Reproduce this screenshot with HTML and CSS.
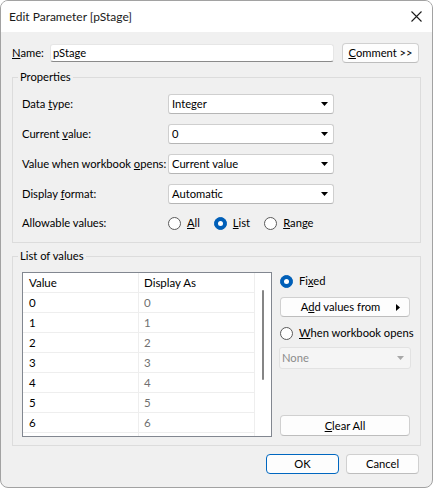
FILE: index.html
```html
<!DOCTYPE html>
<html>
<head>
<meta charset="utf-8">
<title>Edit Parameter</title>
<link rel="stylesheet" href="styles.css">
</head>
<body>
<div class="window">
  <div class="titlebar">
    <span class="title">Edit Parameter [pStage]</span>
    <svg class="close" width="11" height="11" viewBox="0 0 11 11"><path d="M0.5 0.5L10.5 10.5M10.5 0.5L0.5 10.5" stroke="#1b1b1b" stroke-width="1.1" fill="none"/></svg>
  </div>
  <div class="content">
    <div class="name-row">
      <span class="name-label"><u>N</u>ame:</span>
      <div class="textbox">pStage</div>
      <div class="btn comment-btn"><u>C</u>omment &gt;&gt;</div>
    </div>

    <div class="group props">
      <span class="group-title">Properties</span>
      <div class="prop-rows">
        <div class="prop-row">
          <span class="prop-label">Data <u>t</u>ype:</span>
          <div class="combo"><span>Integer</span><svg width="7" height="4" viewBox="0 0 7 4"><path d="M0 0H7L3.5 4Z" fill="#000"/></svg></div>
        </div>
        <div class="prop-row">
          <span class="prop-label">Current <u>v</u>alue:</span>
          <div class="combo"><span>0</span><svg width="7" height="4" viewBox="0 0 7 4"><path d="M0 0H7L3.5 4Z" fill="#000"/></svg></div>
        </div>
        <div class="prop-row">
          <span class="prop-label">Value when workbook <u>o</u>pens:</span>
          <div class="combo"><span>Current value</span><svg width="7" height="4" viewBox="0 0 7 4"><path d="M0 0H7L3.5 4Z" fill="#000"/></svg></div>
        </div>
        <div class="prop-row">
          <span class="prop-label">Display <u>f</u>ormat:</span>
          <div class="combo"><span>Automatic</span><svg width="7" height="4" viewBox="0 0 7 4"><path d="M0 0H7L3.5 4Z" fill="#000"/></svg></div>
        </div>
        <div class="prop-row radio-row">
          <span class="prop-label">Allowable values:</span>
          <div class="radios">
            <span class="radio"><span class="circle"></span><span><u>A</u>ll</span></span>
            <span class="radio"><span class="circle checked"></span><span><u>L</u>ist</span></span>
            <span class="radio"><span class="circle"></span><span><u>R</u>ange</span></span>
          </div>
        </div>
      </div>
    </div>

    <div class="group values">
      <span class="group-title">List of values</span>
      <div class="list-body">
        <div class="table">
          <div class="grid">
            <div class="cell c1">Value</div><div class="cell c2 head">Display As</div>
            <div class="cell c1">0</div><div class="cell c2">0</div>
            <div class="cell c1">1</div><div class="cell c2">1</div>
            <div class="cell c1">2</div><div class="cell c2">2</div>
            <div class="cell c1">3</div><div class="cell c2">3</div>
            <div class="cell c1">4</div><div class="cell c2">4</div>
            <div class="cell c1">5</div><div class="cell c2">5</div>
            <div class="cell c1">6</div><div class="cell c2">6</div>
            <div class="cell c1 partial"></div><div class="cell c2 partial"></div>
          </div>
          <div class="scroll"><div class="thumb"></div></div>
        </div>
        <div class="panel">
          <div class="radio panel-radio"><span class="circle checked"></span><span>Fi<u>x</u>ed</span></div>
          <div class="btn add-btn"><span class="add-label">A<u>d</u>d values from</span><svg width="4" height="7" viewBox="0 0 4 7"><path d="M0 0V7L4 3.5Z" fill="#000"/></svg></div>
          <div class="radio panel-radio when"><span class="circle"></span><span><u>W</u>hen workbook opens</span></div>
          <div class="combo disabled"><span>None</span><svg width="7" height="4" viewBox="0 0 7 4"><path d="M0 0H7L3.5 4Z" fill="#a8a8a8"/></svg></div>
          <div class="btn clear-btn"><u>C</u>lear All</div>
        </div>
      </div>
    </div>

    <div class="footer">
      <div class="btn ok-btn">OK</div>
      <div class="btn">Cancel</div>
    </div>
  </div>
</div>
</body>
</html>
```

FILE: styles.css
```css
html, body {
  margin: 0;
  padding: 0;
  background: #ffffff;
}

body {
  font-family: "Lato", "Liberation Sans", sans-serif;
  font-size: 11.2px;
  line-height: 16px;
  color: #000;
}

u {
  text-decoration: underline;
  text-underline-offset: 1px;
}

.window {
  width: 433px;
  height: 488px;
  box-sizing: border-box;
  border: 1px solid #a2a2a2;
  border-radius: 8px;
  overflow: hidden;
  background: #f0f0f0;
  display: flex;
  flex-direction: column;
}

.titlebar {
  height: 31px;
  flex: none;
  background: #ffffff;
  display: flex;
  align-items: center;
  justify-content: space-between;
  padding: 0 10px 0 8px;
}

.title {
  font-size: 12px;
  color: #1a1a1a;
  white-space: nowrap;
}

.close {
  display: block;
  margin-top: -1px;
}

.content {
  padding: 11px 11px 0 11px;
  display: flex;
  flex-direction: column;
}

/* Name row */
.name-row {
  display: flex;
  align-items: center;
  height: 20px;
  padding-right: 2px;
}

.name-label {
  width: 38px;
  flex: none;
}

.textbox {
  width: 284px;
  height: 18px;
  box-sizing: border-box;
  background: #fff;
  border: 1px solid #e6e6e6;
  border-bottom-color: #8a8a8a;
  border-radius: 3px;
  padding-left: 2px;
  line-height: 16px;
}

.btn {
  box-sizing: border-box;
  height: 20px;
  background: #fdfdfd;
  border: 1px solid #d0d0d0;
  border-bottom-color: #bdbdbd;
  border-radius: 4px;
  display: flex;
  align-items: center;
  justify-content: center;
  line-height: 16px;
  white-space: nowrap;
}

.comment-btn {
  width: 77px;
  margin-left: 8px;
}

/* Group boxes */
.group {
  border: 1px solid #dcdcdc;
  padding: 0 9px 9px 9px;
  display: flex;
  flex-direction: column;
}

.props {
  margin-top: 14px;
  padding-bottom: 10px;
}

.values {
  margin-top: 13px;
  padding-bottom: 8px;
}

.group-title {
  align-self: flex-start;
  margin-top: -9px;
  margin-left: -4px;
  padding: 0 2px;
  background: #f0f0f0;
  line-height: 16px;
}

.prop-rows {
  margin-top: 9px;
  display: flex;
  flex-direction: column;
  gap: 10px;
}

.prop-row {
  display: flex;
  align-items: center;
  height: 20px;
}

.radio-row {
  height: 18px;
}

.prop-label {
  width: 146px;
  flex: none;
  white-space: nowrap;
}

.combo {
  box-sizing: border-box;
  width: 166px;
  height: 20px;
  background: #fff;
  border: 1px solid #cfcfcf;
  border-bottom-color: #b5b5b5;
  border-radius: 3px;
  padding: 0 5px 0 3px;
  display: flex;
  align-items: center;
  justify-content: space-between;
  white-space: nowrap;
}

.combo svg {
  display: block;
}

.combo.disabled {
  width: 132px;
  height: 22px;
  margin-left: -1px;
  margin-top: 5px;
  background: #f5f5f5;
  border-color: #e2e2e2;
  color: #8c8c8c;
  padding: 0 6px 0 2px;
}

/* Radios */
.radios {
  display: flex;
  align-items: center;
  gap: 14px;
}

.radio {
  display: flex;
  align-items: center;
  gap: 6px;
  white-space: nowrap;
}

.circle {
  width: 13px;
  height: 13px;
  box-sizing: border-box;
  border: 1px solid #5a5a5a;
  border-radius: 50%;
  background: #fff;
  flex: none;
  display: flex;
  align-items: center;
  justify-content: center;
}

.circle.checked {
  background: #005fb8;
  border-color: #005fb8;
}

.circle.checked::after {
  content: "";
  width: 5px;
  height: 5px;
  border-radius: 50%;
  background: #fff;
}

/* List of values */
.list-body {
  margin-top: 8px;
  display: flex;
}

.table {
  width: 250px;
  height: 165px;
  box-sizing: border-box;
  border: 1px solid #828790;
  background: #fff;
  display: flex;
  overflow: hidden;
  flex: none;
}

.grid {
  width: 232px;
  flex: none;
  display: grid;
  grid-template-columns: 116px 116px;
  grid-auto-rows: 20px;
  align-content: start;
}

.cell {
  box-sizing: border-box;
  border-right: 1px solid #eeeeee;
  border-bottom: 1px solid #eeeeee;
  line-height: 19px;
  white-space: nowrap;
  font-size: 11.5px;
}

.c1 {
  padding-left: 6px;
}

.c2 {
  padding-left: 5px;
  color: #707070;
}

.c2.head {
  color: #000;
}

.scroll {
  flex: 1;
  display: flex;
  justify-content: center;
}

.thumb {
  width: 2px;
  height: 90px;
  margin-top: 17px;
  background: #858585;
  border-radius: 1px;
}

.panel {
  width: 130px;
  margin-left: 8px;
  display: flex;
  flex-direction: column;
}

.panel-radio {
  height: 18px;
}

.add-btn {
  margin-top: 7px;
  padding-right: 9px;
}

.add-btn .add-label {
  flex: 1;
  text-align: center;
  padding-left: 4px;
}

.add-btn svg {
  display: block;
}

.when {
  margin-top: 7px;
}

.clear-btn {
  margin-top: auto;
  margin-bottom: 1px;
  height: 21px;
}

/* Footer */
.footer {
  margin-top: 8px;
  padding-right: 2px;
  display: flex;
  justify-content: flex-end;
  gap: 7px;
}

.footer .btn {
  width: 73px;
}

.ok-btn {
  border-color: #0067c0;
}
```
